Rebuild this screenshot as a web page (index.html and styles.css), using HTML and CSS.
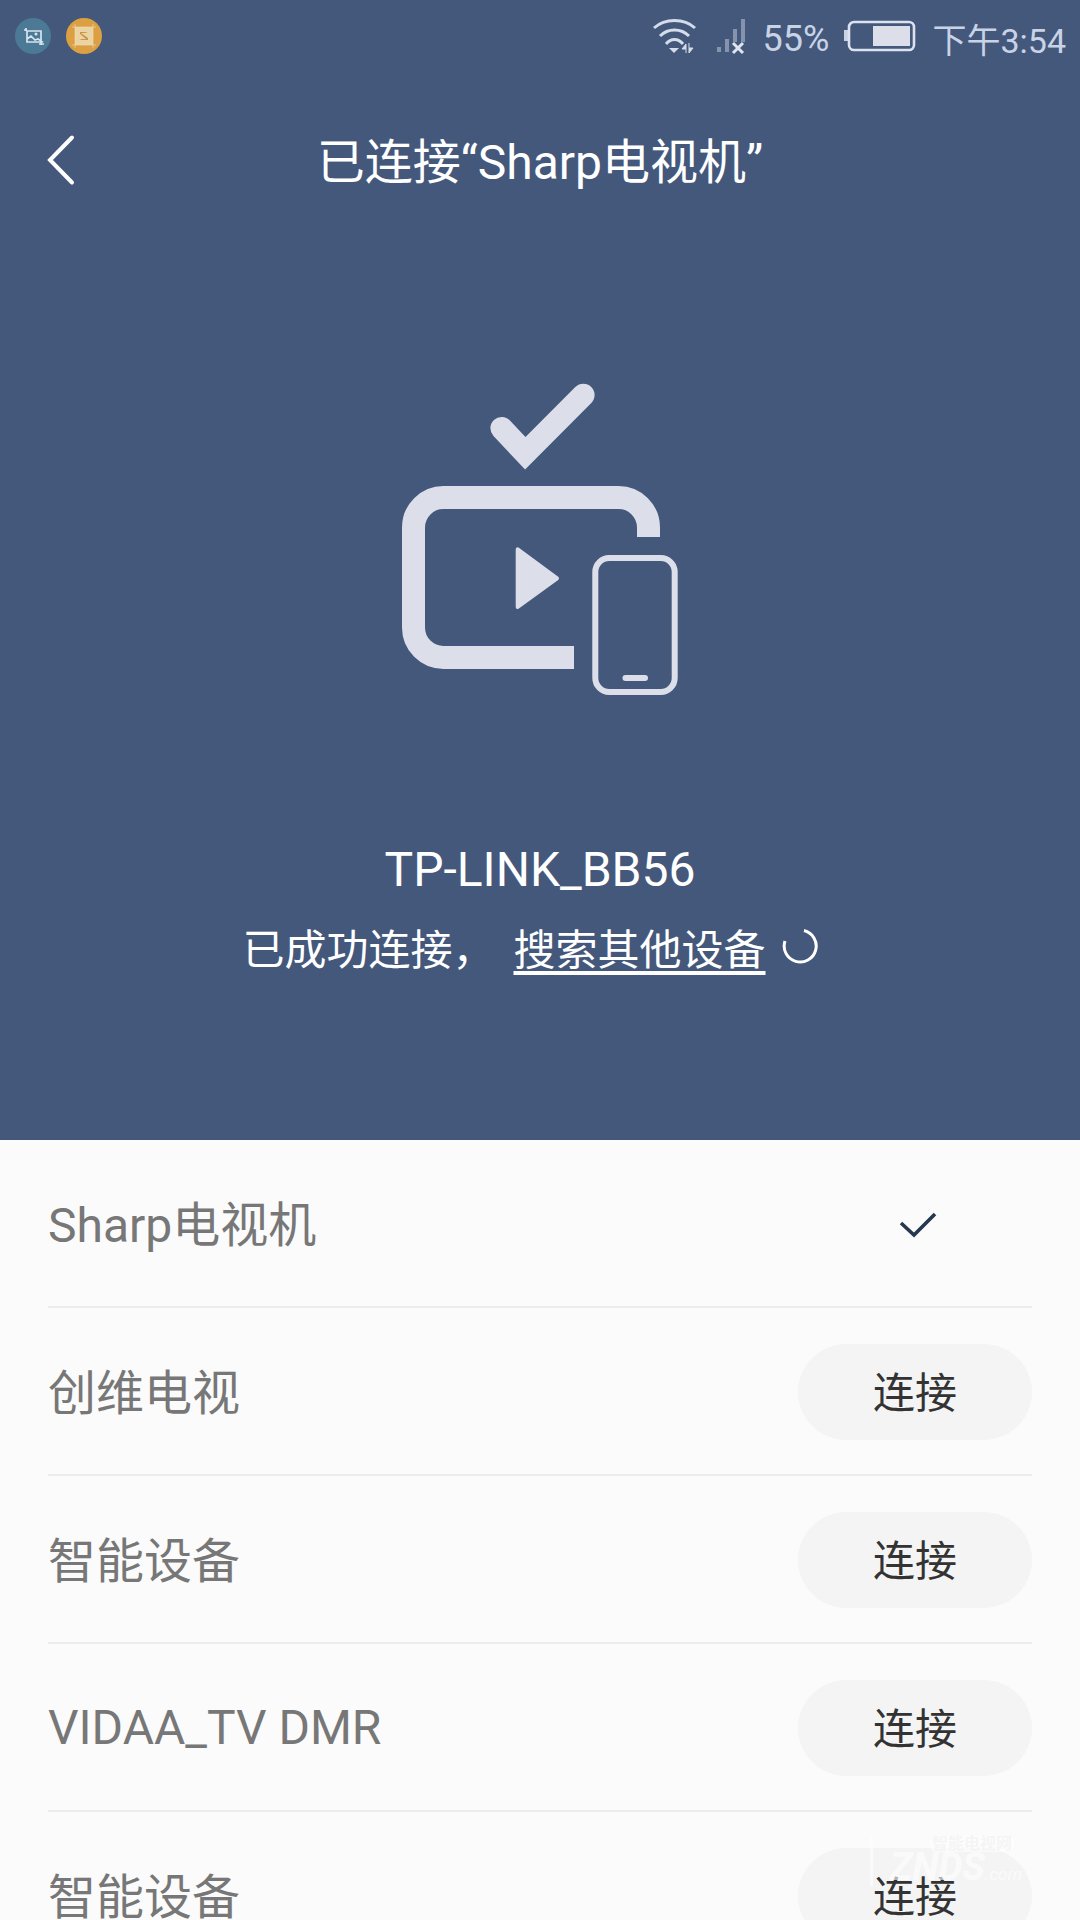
FILE: index.html
```html
<!DOCTYPE html>
<html>
<head>
  <meta charset="UTF-8">
  <title>已连接</title>
  <link rel="stylesheet" href="styles.css">
</head>
<body>
  <div id="screen">
    <div id="hero">
      <div id="status-bar">
        <div class="status-left">
          <svg class="app-dot" viewBox="0 0 36 36">
            <circle cx="18" cy="18" r="18" fill="#4c7a96"/>
            <path d="M12 13h14v11H12zM9 12h3M11 10v3M12 21l4-3 4 4 3-1 5 3M26 24v3M24 26h5" fill="none" stroke="#d6e4ee" stroke-width="1.700"/>
            <circle cx="21" cy="16" r="1.500" fill="#d6e4ee"/>
          </svg>
          <svg class="app-dot" viewBox="0 0 36 36">
            <circle cx="18" cy="18" r="18" fill="#dca043"/>
            <rect x="9" y="9" width="18" height="18" fill="#ecd3a4"/>
            <path d="M14 14h8l-3 1h-4l7 5v2h-9l3-1h4l-6-5z" fill="#c8964a"/>
            <path d="M9 6v24M6 9h24M27 6v24M6 27h24" fill="none" stroke="#f0dcb8" stroke-width=".6"/>
          </svg>
        </div>
        <div class="status-right">
          <svg class="wifi" width="46" height="40" viewBox="0 0 46 40">
            <g fill="none" stroke="#d5dcea" stroke-width="3">
              <path d="M1 12C12 2 31 2 42 12"/>
              <path d="M7 20C15 12 28 12 36 20"/>
              <path d="M13 28C18 22 25 22 30 28"/>
            </g>
            <path d="M16 32h10l-5 5z" fill="#d5dcea"/>
            <path d="M33 37V28l-4 5h4M36 27v10l4-5h-4" fill="#d5dcea" stroke="#d5dcea" stroke-width="1"/>
          </svg>
          <svg class="signal" width="32" height="40" viewBox="0 0 32 40">
            <rect x="1" y="31" width="4" height="5" fill="#8593ae"/>
            <rect x="9" y="23" width="4" height="13" fill="#8593ae"/>
            <rect x="17" y="13" width="4" height="13" fill="#8593ae"/>
            <rect x="25" y="3" width="4" height="23" fill="#8593ae"/>
            <path d="M17 27l10 10M27 27L17 37" stroke="#dfe4ee" stroke-width="3" fill="none"/>
          </svg>
          <span class="status-text pct">55%</span>
          <svg class="battery" width="72" height="32" viewBox="0 0 72 32">
            <rect x="0" y="10" width="4" height="11" fill="#c9d3e6"/>
            <rect x="5" y="2" width="65" height="28" rx="5" fill="none" stroke="#dce2ee" stroke-width="2.600"/>
            <rect x="29" y="6" width="37" height="20" fill="#dcdfe9"/>
          </svg>
          <span class="status-text clock">下午3:54</span>
        </div>
      </div>

      <div id="toolbar">
        <svg class="back" width="48" height="60" viewBox="0 0 48 60">
          <path d="M25 7.500L3 30l22 22.500" fill="none" stroke="#fff" stroke-width="4" stroke-linecap="round" stroke-linejoin="miter"/>
        </svg>
        <h1>已连接“Sharp电视机”</h1>
      </div>

      <svg class="cast-art" width="300" height="330" viewBox="390 380 300 330">
        <g fill="none" stroke="#dcdfe9">
          <path d="M501.700 428.300L525.300 453.300L583.300 395" stroke-width="22.600" stroke-linecap="round"/>
          <path d="M648.500 537V527.500A30 30 0 0 0 618.500 497.500H443.500A30 30 0 0 0 413.500 527.500V627.500A30 30 0 0 0 443.500 657.500H574" stroke-width="23"/>
          <rect x="595.300" y="558" width="79.400" height="134" rx="14" stroke-width="6"/>
          <path d="M625.500 678H645" stroke-width="6" stroke-linecap="round"/>
        </g>
        <path d="M517.700 549.300L557 578.300L517.700 607z" fill="#dcdfe9" stroke="#dcdfe9" stroke-width="4" stroke-linejoin="round"/>
      </svg>

      <div class="device-name">TP-LINK_BB56</div>
      <div class="connect-state">
        <span>已成功连接，</span>
        <a class="search-link">搜索其他设备</a>
        <svg class="spinner" width="38" height="38" viewBox="0 0 38 38">
          <path d="M4 14A16 16 0 1 0 23 3.500" fill="none" stroke="#fff" stroke-width="3"/>
        </svg>
      </div>
    </div>

    <div id="device-list">
      <div class="device-row">
        <span class="device-label">Sharp电视机</span>
        <div class="row-action">
          <svg class="row-check" width="40" height="30" viewBox="0 0 40 30">
            <path d="M3 12l13 12L37 3" fill="none" stroke="#26374f" stroke-width="3.600"/>
          </svg>
        </div>
      </div>
      <div class="device-row">
        <span class="device-label">创维电视</span>
        <button class="connect-btn">连接</button>
      </div>
      <div class="device-row">
        <span class="device-label">智能设备</span>
        <button class="connect-btn">连接</button>
      </div>
      <div class="device-row">
        <span class="device-label latin">VIDAA_TV DMR</span>
        <button class="connect-btn">连接</button>
      </div>
      <div class="device-row">
        <span class="device-label">智能设备</span>
        <button class="connect-btn">连接</button>
      </div>
    </div>

    <div class="watermark">
      <span class="wm-pill">智能电视网</span>
      <span class="wm-logo">ZNDS<small>.com</small></span>
    </div>
  </div>
</body>
</html>
```

FILE: styles.css
```css
* {
  box-sizing: border-box;
}

html, body {
  margin: 0;
  height: 1920px;
  overflow: hidden;
}

body {
  font-family: Roboto, "Noto Sans CJK SC", sans-serif;
  background-color: #fbfbfb;
}

#screen {
  position: relative;
  width: 1080px;
  height: 1920px;
  overflow: hidden;
}

#hero {
  height: 1140px;
  background-color: #44587c;
  display: flex;
  flex-direction: column;
  align-items: center;
  color: #ffffff;
}

#status-bar {
  width: 100%;
  height: 72px;
  padding: 0 14px 0 15px;
  display: flex;
  align-items: center;
  justify-content: space-between;
}

.status-left {
  display: flex;
  gap: 15px;
}

.app-dot {
  width: 36px;
  height: 36px;
  display: block;
}

.status-right {
  display: flex;
  align-items: center;
}

.status-text {
  font-size: 34px;
  color: #c9d3e6;
  padding-top: 4px;
}

.wifi {
  margin-right: 17px;
}

.signal {
  margin-right: 15px;
}

.pct {
  font-size: 36px;
  padding-top: 6px;
  margin-right: 15px;
}

.clock {
  margin-left: 16px;
}

#toolbar {
  width: 100%;
  height: 176px;
  padding-bottom: 5px;
  position: relative;
  display: flex;
  align-items: center;
  justify-content: center;
}

#toolbar h1 {
  margin: 0;
  font-size: 48px;
  font-weight: 400;
}

.back {
  position: absolute;
  left: 47px;
  top: 58px;
}

.cast-art {
  display: block;
  margin-top: 132px;
}

.device-name {
  margin-top: 130px;
  font-size: 48px;
  line-height: 60px;
}

.connect-state {
  margin-top: 19px;
  height: 60px;
  padding-bottom: 6px;
  display: flex;
  align-items: center;
  font-size: 42px;
}

.search-link {
  margin-left: 19px;
  text-decoration: underline;
  text-underline-offset: 6px;
}

.spinner {
  margin-left: 15px;
  margin-right: 19px;
}

#device-list {
  padding: 0 48px;
}

.device-row {
  height: 168px;
  display: flex;
  align-items: center;
  justify-content: space-between;
  border-bottom: 2px solid #ececec;
}

.device-label {
  font-size: 48px;
  color: #777777;
  margin-bottom: 5px;
}

.device-label.latin {
  margin-bottom: 0;
}

.row-action {
  width: 234px;
  display: flex;
  justify-content: center;
}

.row-check {
  margin: 5px 0 0 5px;
}

.connect-btn {
  width: 234px;
  height: 96px;
  margin-top: 1px;
  border: none;
  border-radius: 48px;
  background-color: #f4f4f4;
  font-family: inherit;
  font-size: 42px;
  color: #333333;
  padding: 0 0 5px;
}

.watermark {
  position: absolute;
  left: 870px;
  top: 1836px;
  width: 170px;
  height: 50px;
  color: rgba(255, 255, 255, 0.65);
  border-left: 3px solid rgba(255, 255, 255, 0.5);
}

.wm-pill {
  position: absolute;
  left: 57px;
  top: 0;
  font-size: 16px;
  font-weight: 700;
  line-height: 16px;
  padding: 0 2px;
  border-radius: 6px;
  background-color: rgba(255, 255, 255, 0.5);
  color: rgba(244, 244, 244, 0.9);
}

.wm-logo {
  position: absolute;
  left: 17px;
  top: 14px;
  font-size: 38px;
  font-weight: 700;
  font-style: italic;
  line-height: 34px;
}

.wm-logo small {
  font-size: 17px;
  font-weight: 400;
}
```
